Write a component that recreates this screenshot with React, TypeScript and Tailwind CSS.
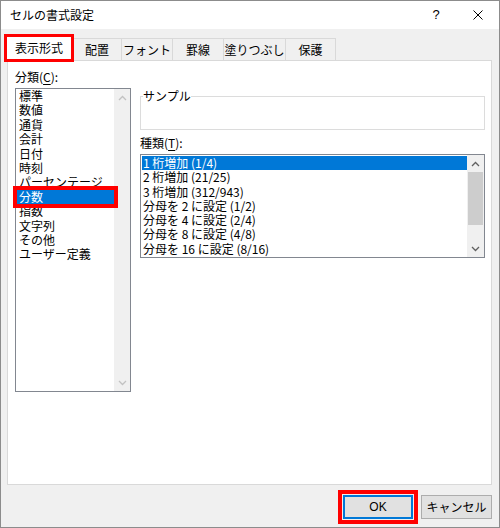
import React from "react";

const categories = [
  "標準",
  "数値",
  "通貨",
  "会計",
  "日付",
  "時刻",
  "パーセンテージ",
  "分数",
  "指数",
  "文字列",
  "その他",
  "ユーザー定義",
];

const types = [
  "1 桁増加 (1/4)",
  "2 桁増加 (21/25)",
  "3 桁増加 (312/943)",
  "分母を 2 に設定 (1/2)",
  "分母を 4 に設定 (2/4)",
  "分母を 8 に設定 (4/8)",
  "分母を 16 に設定 (8/16)",
];

const tabs = [
  { label: "配置", w: "w-[49px]" },
  { label: "フォント", w: "w-[51px]" },
  { label: "罫線", w: "w-[51px]" },
  { label: "塗りつぶし", w: "w-[62px]" },
  { label: "保護", w: "w-[50px]" },
];

function Chevron({ up, className }: { up?: boolean; className: string }) {
  return (
    <svg width="9" height="6" viewBox="0 0 9 6" className={className}>
      <path
        d={up ? "M1 5 L4.5 1.5 L8 5" : "M1 1 L4.5 4.5 L8 1"}
        fill="none"
        stroke="currentColor"
        strokeWidth="1.3"
      />
    </svg>
  );
}

function ScrollBar({ width, disabled }: { width: string; disabled?: boolean }) {
  const arrow = disabled ? "text-[#c2c2c2]" : "text-[#606060]";
  return (
    <div className={`${width} shrink-0 bg-[#f0f0f0] flex flex-col`}>
      <div className="h-[17px] flex items-center justify-center">
        <Chevron up className={arrow} />
      </div>
      <div className="flex-1 px-[1px]">
        {!disabled && <div className="h-[53px] bg-[#cdcdcd]" />}
      </div>
      <div className="h-[17px] flex items-center justify-center">
        <Chevron className={arrow} />
      </div>
    </div>
  );
}

export default function App() {
  return (
    <div className="w-[500px] h-[528px] border border-[#8c8c8c] flex flex-col bg-[#f0f0f0] text-[12px] text-black font-['Noto_Sans_CJK_JP',sans-serif] [font-feature-settings:palt] [font-variant-east-asian:proportional-width]">
      {/* title bar */}
      <div className="h-[28px] shrink-0 bg-white flex items-center pl-[9px] leading-[14px]">
        <span>セルの書式設定</span>
        <span className="ml-auto w-[10px] text-center text-[13px] font-['Liberation_Sans',sans-serif]">
          ?
        </span>
        <svg width="10" height="10" viewBox="0 0 10 10" className="ml-[32px] mr-[16px]">
          <path d="M0.5 0.5 L9.5 9.5 M9.5 0.5 L0.5 9.5" stroke="#000" strokeWidth="1" />
        </svg>
      </div>

      <div className="flex-1 flex flex-col pl-[6px] pr-[7px]">
        {/* tabs */}
        <div className="h-[31px] shrink-0 flex items-end leading-[14px]">
          <div className="relative z-10 -ml-[2px] -mb-[1px] w-[68px] h-[26px] bg-white border-t border-x border-[#d9d9d9] flex items-center justify-center pb-[2px]">
            表示形式
            <div className="absolute -left-[2px] -right-[2px] -top-[2px] -bottom-[1px] border-[3px] border-[#f00]" />
          </div>
          {tabs.map((t) => (
            <div
              key={t.label}
              className={`${t.w} h-[22px] border-t border-r border-[#d9d9d9] flex items-center justify-center pt-[1px]`}
            >
              {t.label}
            </div>
          ))}
        </div>

        {/* panel */}
        <div className="h-[425px] shrink-0 bg-white border border-[#d9d9d9] flex pl-[7px] pr-[6px] leading-[14px]">
          <div className="w-[116px] shrink-0 pt-[9px]">
            <div className="h-[14px]">
              分類(<span className="underline underline-offset-2">C</span>):
            </div>
            <div className="mt-[4px] h-[304px] border border-[#828790] flex">
              <div className="flex-1 pl-[1px]">
                {categories.map((c) =>
                  c === "分数" ? (
                    <div
                      key={c}
                      className="relative z-10 h-[14.4px] leading-[14.4px] pl-[2px] bg-[#0078d7] text-white outline-4 outline-[#f00]"
                    >
                      {c}
                    </div>
                  ) : (
                    <div key={c} className="h-[14.4px] leading-[14.4px] pl-[2px]">
                      {c}
                    </div>
                  )
                )}
              </div>
              <ScrollBar width="w-[16px]" disabled />
            </div>
          </div>

          <div className="flex-1 ml-[9px] pt-[35px]">
            <div className="relative h-[34px] border border-[#dcdcdc]">
              <span className="absolute left-[2px] -top-[8px] bg-white">サンプル</span>
            </div>
            <div className="mt-[6px] h-[14px]">
              種類(<span className="underline underline-offset-2">T</span>):
            </div>
            <div className="mt-[4px] h-[104px] border border-[#828790] flex">
              <div className="flex-1 pl-[1px] pt-[1px]">
                {types.map((t, i) => (
                  <div
                    key={t}
                    className={`h-[14.3px] leading-[14.3px] pl-[1px] ${
                      i === 0 ? "bg-[#0078d7] text-white" : ""
                    }`}
                  >
                    {t}
                  </div>
                ))}
              </div>
              <ScrollBar width="w-[17px]" />
            </div>
          </div>
        </div>

        {/* buttons */}
        <div className="mt-[10px] flex justify-end gap-[8px] leading-[14px]">
          <button className="w-[70px] h-[24px] bg-[#e1e1e1] border-2 border-[#0078d7] outline-4 outline-offset-[1px] outline-[#f00] font-['Liberation_Sans',sans-serif]">
            OK
          </button>
          <button className="w-[71px] h-[24px] bg-[#e1e1e1] border border-[#adadad]">
            キャンセル
          </button>
        </div>
      </div>
    </div>
  );
}
